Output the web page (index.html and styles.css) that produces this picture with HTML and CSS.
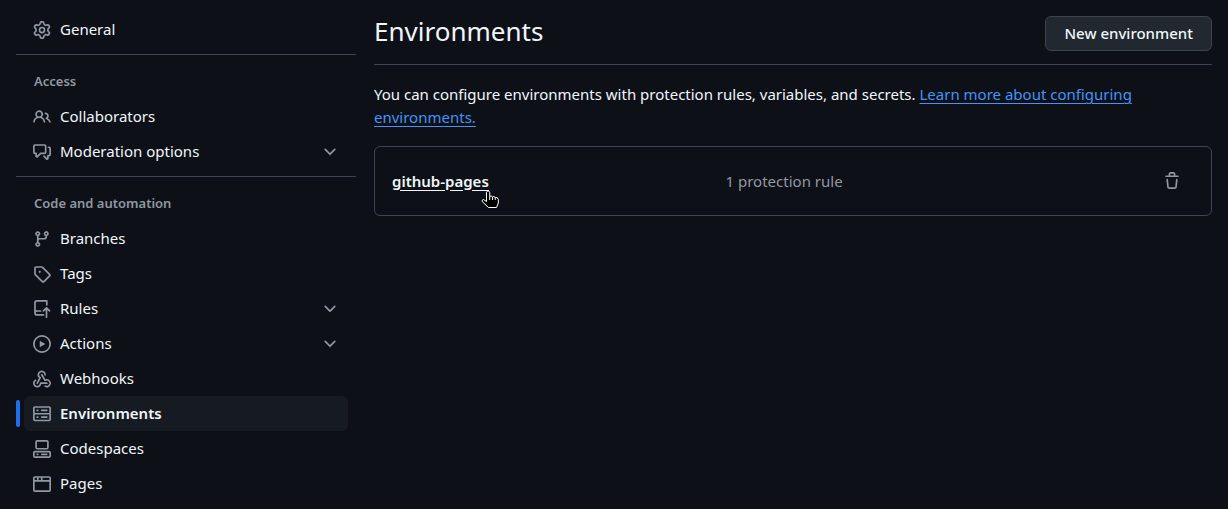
FILE: index.html
```html
<!DOCTYPE html>
<html lang="en">
<head>
<meta charset="utf-8">
<meta name="viewport" content="width=device-width, initial-scale=1">
<title>Environments</title>
<link rel="stylesheet" href="styles.css">
</head>
<body>
<div class="layout">
  <nav class="sidebar" aria-label="Settings">
    <ul class="nav-list">
      <li><a class="nav-item" href="#general"><svg class="icon" viewBox="0 0 16 16"><path d="M8 0a8.2 8.2 0 0 1 .701.031C9.444.095 9.99.645 10.16 1.29l.288 1.107c.018.066.079.158.212.224.231.114.454.243.668.386.123.082.233.09.299.071l1.103-.303c.644-.176 1.392.021 1.82.63.27.385.506.792.704 1.218.315.675.111 1.422-.364 1.891l-.814.806c-.049.048-.098.147-.088.294.016.257.016.515 0 .772-.01.147.038.246.088.294l.814.806c.475.469.679 1.216.364 1.891a7.977 7.977 0 0 1-.704 1.217c-.428.61-1.176.807-1.82.63l-1.102-.302c-.067-.019-.177-.011-.3.071a5.909 5.909 0 0 1-.668.386c-.133.066-.194.158-.211.224l-.29 1.106c-.168.646-.715 1.196-1.458 1.26a8.006 8.006 0 0 1-1.402 0c-.743-.064-1.289-.614-1.458-1.26l-.289-1.106c-.018-.066-.079-.158-.212-.224a5.738 5.738 0 0 1-.668-.386c-.123-.082-.233-.09-.299-.071l-1.103.303c-.644.176-1.392-.021-1.82-.63a8.12 8.12 0 0 1-.704-1.218c-.315-.675-.111-1.422.363-1.891l.815-.806c.05-.048.098-.147.088-.294a6.214 6.214 0 0 1 0-.772c.01-.147-.038-.246-.088-.294l-.815-.806C.635 6.045.431 5.298.746 4.623a7.92 7.92 0 0 1 .704-1.217c.428-.61 1.176-.807 1.82-.63l1.102.302c.067.019.177.011.3-.071.214-.143.437-.272.668-.386.133-.066.194-.158.211-.224l.29-1.106C6.009.645 6.556.095 7.299.03 7.53.01 7.764 0 8 0Zm-.571 1.525c-.036.003-.108.036-.137.146l-.289 1.105c-.147.561-.549.967-.998 1.189-.173.086-.34.183-.5.29-.417.278-.97.423-1.529.27l-1.103-.303c-.109-.03-.175.016-.195.045-.22.312-.412.644-.573.99-.014.031-.021.11.059.19l.815.806c.411.406.562.957.53 1.456a4.709 4.709 0 0 0 0 .582c.032.499-.119 1.05-.53 1.456l-.815.806c-.081.08-.073.159-.059.19.162.346.353.677.573.989.02.03.085.076.195.046l1.102-.303c.56-.153 1.113-.008 1.53.27.161.107.328.204.501.29.447.222.85.629.997 1.189l.289 1.105c.029.109.101.143.137.146a6.6 6.6 0 0 0 1.142 0c.036-.003.108-.036.137-.146l.289-1.105c.147-.561.549-.967.998-1.189.173-.086.34-.183.5-.29.417-.278.97-.423 1.529-.27l1.103.303c.109.029.175-.016.195-.045.22-.313.411-.644.573-.99.014-.031.021-.11-.059-.19l-.815-.806c-.411-.406-.562-.957-.53-1.456a4.709 4.709 0 0 0 0-.582c-.032-.499.119-1.05.53-1.456l.815-.806c.081-.08.073-.159.059-.19a6.464 6.464 0 0 0-.573-.989c-.02-.03-.085-.076-.195-.046l-1.102.303c-.56.153-1.113.008-1.53-.27a4.44 4.44 0 0 0-.501-.29c-.447-.222-.85-.629-.997-1.189l-.289-1.105c-.029-.11-.101-.143-.137-.146a6.6 6.6 0 0 0-1.142 0ZM11 8a3 3 0 1 1-6 0 3 3 0 0 1 6 0ZM9.5 8a1.5 1.5 0 1 0-3.001.001A1.5 1.5 0 0 0 9.5 8Z"/></svg><span>General</span></a></li>
    </ul>
    <section class="nav-section">
      <h2 class="nav-heading">Access</h2>
      <ul class="nav-list">
        <li><a class="nav-item" href="#collaborators"><svg class="icon" viewBox="0 0 16 16"><path d="M2 5.5a3.5 3.5 0 1 1 5.898 2.549 5.508 5.508 0 0 1 3.034 4.084.75.75 0 1 1-1.482.235 4 4 0 0 0-7.9 0 .75.75 0 0 1-1.482-.236A5.507 5.507 0 0 1 3.102 8.05 3.493 3.493 0 0 1 2 5.5ZM11 4a3.001 3.001 0 0 1 2.22 5.018 5.01 5.01 0 0 1 2.56 3.012.749.749 0 0 1-.885.954.752.752 0 0 1-.549-.514 3.507 3.507 0 0 0-2.522-2.372.75.75 0 0 1-.574-.73v-.352a.75.75 0 0 1 .416-.672A1.5 1.5 0 0 0 11 5.5.75.75 0 0 1 11 4Zm-5.5-.5a2 2 0 1 0-.001 3.999A2 2 0 0 0 5.5 3.5Z"/></svg><span>Collaborators</span></a></li>
        <li><button class="nav-item" type="button" aria-expanded="false"><svg class="icon" viewBox="0 0 16 16"><path d="M1.75 1h8.5c.966 0 1.75.784 1.75 1.75v5.5A1.75 1.75 0 0 1 10.25 10H7.061l-2.574 2.573A1.458 1.458 0 0 1 2 11.543V10h-.25A1.75 1.75 0 0 1 0 8.25v-5.5C0 1.784.784 1 1.75 1ZM1.5 2.75v5.5c0 .138.112.25.25.25h1a.75.75 0 0 1 .75.75v2.19l2.72-2.72a.749.749 0 0 1 .53-.22h3.5a.25.25 0 0 0 .25-.25v-5.5a.25.25 0 0 0-.25-.25h-8.5a.25.25 0 0 0-.25.25Zm13 2a.25.25 0 0 0-.25-.25h-.5a.75.75 0 0 1 0-1.5h.5c.966 0 1.75.784 1.75 1.75v5.5A1.75 1.75 0 0 1 14.25 12H14v1.543a1.458 1.458 0 0 1-2.487 1.03L9.22 12.28a.749.749 0 0 1 .326-1.275.749.749 0 0 1 .734.215l2.22 2.22v-2.19a.75.75 0 0 1 .75-.75h1a.25.25 0 0 0 .25-.25Z"/></svg><span>Moderation options</span><svg class="icon chevron" viewBox="0 0 16 16"><path d="M12.78 5.22a.749.749 0 0 1 0 1.06l-4.25 4.25a.749.749 0 0 1-1.06 0L3.22 6.28a.749.749 0 1 1 1.06-1.06L8 8.939l3.72-3.719a.749.749 0 0 1 1.06 0Z"/></svg></button></li>
      </ul>
    </section>
    <section class="nav-section">
      <h2 class="nav-heading">Code and automation</h2>
      <ul class="nav-list">
        <li><a class="nav-item" href="#branches"><svg class="icon" viewBox="0 0 16 16"><path d="M9.5 3.25a2.25 2.25 0 1 1 3 2.122V6A2.5 2.5 0 0 1 10 8.5H6a1 1 0 0 0-1 1v1.128a2.251 2.251 0 1 1-1.5 0V5.372a2.25 2.25 0 1 1 1.5 0v1.836A2.493 2.493 0 0 1 6 7h4a1 1 0 0 0 1-1v-.628A2.25 2.25 0 0 1 9.5 3.25Zm-6 0a.75.75 0 1 0 1.5 0 .75.75 0 0 0-1.5 0Zm8.25-.75a.75.75 0 1 0 0 1.5.75.75 0 0 0 0-1.5ZM4.25 12a.75.75 0 1 0 0 1.5.75.75 0 0 0 0-1.5Z"/></svg><span>Branches</span></a></li>
        <li><a class="nav-item" href="#tags"><svg class="icon" viewBox="0 0 16 16"><path d="M1 7.775V2.75C1 1.784 1.784 1 2.75 1h5.025c.464 0 .91.184 1.238.513l6.25 6.25a1.75 1.75 0 0 1 0 2.474l-5.026 5.026a1.75 1.75 0 0 1-2.474 0l-6.25-6.25A1.752 1.752 0 0 1 1 7.775Zm1.5 0c0 .066.026.13.073.177l6.25 6.25a.25.25 0 0 0 .354 0l5.025-5.025a.25.25 0 0 0 0-.354l-6.25-6.25a.25.25 0 0 0-.177-.073H2.75a.25.25 0 0 0-.25.25ZM6 5a1 1 0 1 1 0 2 1 1 0 0 1 0-2Z"/></svg><span>Tags</span></a></li>
        <li><button class="nav-item" type="button" aria-expanded="false"><svg class="icon" viewBox="0 0 16 16"><path d="M1 2.5A2.5 2.5 0 0 1 3.5 0h8.75a.75.75 0 0 1 .75.75v3.5a.75.75 0 0 1-1.5 0V1.5h-8a1 1 0 0 0-1 1v6.708A2.493 2.493 0 0 1 3.5 9h3.25a.75.75 0 0 1 0 1.5H3.5a1 1 0 0 0 0 2h5.75a.75.75 0 0 1 0 1.5H3.5A2.5 2.5 0 0 1 1 11.5Zm13.23 7.79-1.48-1.49v6.45a.75.75 0 0 1-1.5 0V8.81L9.78 10.28a.751.751 0 0 1-1.06-1.06l2.75-2.75a.75.75 0 0 1 1.06 0l2.75 2.75a.75.75 0 0 1-1.05 1.07Z"/></svg><span>Rules</span><svg class="icon chevron" viewBox="0 0 16 16"><path d="M12.78 5.22a.749.749 0 0 1 0 1.06l-4.25 4.25a.749.749 0 0 1-1.06 0L3.22 6.28a.749.749 0 1 1 1.06-1.06L8 8.939l3.72-3.719a.749.749 0 0 1 1.06 0Z"/></svg></button></li>
        <li><button class="nav-item" type="button" aria-expanded="false"><svg class="icon" viewBox="0 0 16 16"><path d="M8 0a8 8 0 1 1 0 16A8 8 0 0 1 8 0ZM1.5 8a6.5 6.5 0 1 0 13 0 6.5 6.5 0 0 0-13 0Zm4.879-2.773 4.264 2.559a.25.25 0 0 1 0 .428l-4.264 2.559A.25.25 0 0 1 6 10.559V5.442a.25.25 0 0 1 .379-.215Z"/></svg><span>Actions</span><svg class="icon chevron" viewBox="0 0 16 16"><path d="M12.78 5.22a.749.749 0 0 1 0 1.06l-4.25 4.25a.749.749 0 0 1-1.06 0L3.22 6.28a.749.749 0 1 1 1.06-1.06L8 8.939l3.72-3.719a.749.749 0 0 1 1.06 0Z"/></svg></button></li>
        <li><a class="nav-item" href="#webhooks"><svg class="icon" viewBox="0 0 16 16"><path d="M5.5 4.25a2.25 2.25 0 0 1 4.5 0 .75.75 0 0 0 1.5 0 3.75 3.75 0 1 0-6.14 2.889l-2.272 4.258a.75.75 0 0 0 1.324.706L7 7.25a.75.75 0 0 0-.309-1.015A2.25 2.25 0 0 1 5.5 4.25Z"/><path d="M7.364 3.607a.75.75 0 0 1 1.03.257l2.608 4.349a3.75 3.75 0 1 1-.628 6.785.75.75 0 0 1 .752-1.299 2.25 2.25 0 1 0-.033-3.88.75.75 0 0 1-1.03-.256L7.107 4.636a.75.75 0 0 1 .257-1.03Z"/><path d="M2.9 8.776A.75.75 0 0 1 2.625 9.8 2.25 2.25 0 1 0 6 11.75a.75.75 0 0 1 .75-.751h5.5a.75.75 0 0 1 0 1.5H7.425a3.751 3.751 0 1 1-5.55-3.998.75.75 0 0 1 1.024.274Z"/></svg><span>Webhooks</span></a></li>
        <li class="current"><a class="nav-item" href="#environments" aria-current="page"><svg class="icon" viewBox="0 0 16 16"><path d="M1.75 1h12.5c.966 0 1.75.784 1.75 1.75v4c0 .372-.116.717-.314 1 .198.283.314.628.314 1v4a1.75 1.75 0 0 1-1.75 1.75H1.75A1.75 1.75 0 0 1 0 12.75v-4c0-.358.109-.707.314-1a1.739 1.739 0 0 1-.314-1v-4C0 1.784.784 1 1.75 1ZM1.5 2.75v4c0 .138.112.25.25.25h12.5a.25.25 0 0 0 .25-.25v-4a.25.25 0 0 0-.25-.25H1.75a.25.25 0 0 0-.25.25Zm.25 5.75a.25.25 0 0 0-.25.25v4c0 .138.112.25.25.25h12.5a.25.25 0 0 0 .25-.25v-4a.25.25 0 0 0-.25-.25ZM7 4.75A.75.75 0 0 1 7.75 4h4.5a.75.75 0 0 1 0 1.5h-4.5A.75.75 0 0 1 7 4.75ZM7.75 10h4.5a.75.75 0 0 1 0 1.5h-4.5a.75.75 0 0 1 0-1.5ZM3 4.75A.75.75 0 0 1 3.75 4h.5a.75.75 0 0 1 0 1.5h-.5A.75.75 0 0 1 3 4.75ZM3.75 10h.5a.75.75 0 0 1 0 1.5h-.5a.75.75 0 0 1 0-1.5Z"/></svg><span>Environments</span></a></li>
        <li><a class="nav-item" href="#codespaces"><svg class="icon" viewBox="0 0 16 16"><path d="M0 11.25c0-.966.784-1.75 1.75-1.75h12.5c.966 0 1.75.784 1.75 1.75v3A1.75 1.75 0 0 1 14.25 16H1.75A1.75 1.75 0 0 1 0 14.25Zm2-9.5C2 .784 2.784 0 3.75 0h8.5C13.216 0 14 .784 14 1.75v5a1.75 1.75 0 0 1-1.75 1.75h-8.5A1.75 1.75 0 0 1 2 6.75Zm1.75-.25a.25.25 0 0 0-.25.25v5c0 .138.112.25.25.25h8.5a.25.25 0 0 0 .25-.25v-5a.25.25 0 0 0-.25-.25Zm-2 9.5a.25.25 0 0 0-.25.25v3c0 .138.112.25.25.25h12.5a.25.25 0 0 0 .25-.25v-3a.25.25 0 0 0-.25-.25Z"/><path d="M7 12.75a.75.75 0 0 1 .75-.75h4.5a.75.75 0 0 1 0 1.5h-4.5a.75.75 0 0 1-.75-.75Zm-4 0a.75.75 0 0 1 .75-.75h.5a.75.75 0 0 1 0 1.5h-.5a.75.75 0 0 1-.75-.75Z"/></svg><span>Codespaces</span></a></li>
        <li><a class="nav-item" href="#pages"><svg class="icon" viewBox="0 0 16 16"><path d="M0 2.75C0 1.784.784 1 1.75 1h12.5c.966 0 1.75.784 1.75 1.75v10.5A1.75 1.75 0 0 1 14.25 15H1.75A1.75 1.75 0 0 1 0 13.25ZM14.5 6h-13v7.25c0 .138.112.25.25.25h12.5a.25.25 0 0 0 .25-.25Zm-6-3.5v2h6V2.75a.25.25 0 0 0-.25-.25ZM5 2.5v2h2v-2Zm-3.25 0a.25.25 0 0 0-.25.25V4.5h2v-2Z"/></svg><span>Pages</span></a></li>
      </ul>
    </section>
  </nav>
  <main class="content">
    <header class="page-header">
      <h1 class="page-title">Environments</h1>
      <button class="button" type="button">New environment</button>
    </header>
    <p class="intro">You can configure environments with protection rules, variables, and secrets. <a class="intro-link" href="#learn-more">Learn more about configuring environments.</a></p>
    <div class="env-row">
      <div class="env-name"><a class="env-link" href="#github-pages">github-pages<svg class="pointer" viewBox="0 0 18 19" aria-hidden="true"><path d="M5.5 11.5V2.2a1.7 1.7 0 0 1 3.2 0V6.5Q10.2 5.3 11.5 6.8Q13 5.9 14.2 7.5Q17 7 17.3 9.5V13L15.5 17.5H7.5L1.2 11.5Q.6 9.8 2.5 9.5L5.5 11.5Z"/><path d="M8.7 6.5V10M11.5 7V10M14.2 7.5V10"/></svg></a></div>
      <span class="env-rules">1 protection rule</span>
      <button class="delete" type="button" aria-label="Delete environment"><svg class="icon" viewBox="0 0 16 16"><path d="M11 1.75V3h2.25a.75.75 0 0 1 0 1.5H2.75a.75.75 0 0 1 0-1.5H5V1.75C5 .784 5.784 0 6.75 0h2.5C10.216 0 11 .784 11 1.75ZM4.496 6.675l.66 6.6a.25.25 0 0 0 .249.225h5.19a.25.25 0 0 0 .249-.225l.66-6.6a.75.75 0 0 1 1.492.149l-.66 6.6A1.748 1.748 0 0 1 10.595 15h-5.19a1.75 1.75 0 0 1-1.741-1.575l-.66-6.6a.75.75 0 1 1 1.492-.15ZM6.5 1.75V3h3V1.75a.25.25 0 0 0-.25-.25h-2.5a.25.25 0 0 0-.25.25Z"/></svg></button>
    </div>
  </main>
</div>
</body>
</html>
```

FILE: styles.css
```css
* {
  box-sizing: border-box;
}

body {
  margin: 0;
  background: #0d1117;
  color: #f0f6fc;
  font-family: "Noto Sans", sans-serif;
  font-size: 15px;
  line-height: 23px;
}

button {
  font: inherit;
  color: inherit;
  cursor: pointer;
}

.layout {
  display: grid;
  grid-template-columns: 340px minmax(0, 1fr);
  gap: 18px;
  padding: 0 16px;
}

.sidebar {
  padding-top: 12px;
}

.nav-list {
  margin: 0;
  padding: 0 8px;
  list-style: none;
}

.nav-section {
  margin-top: 7px;
  padding-top: 9px;
  border-top: 1px solid #3d444d;
}

.nav-heading {
  margin: 0;
  padding: 7px 18px 8px;
  color: #9198a1;
  font-size: 13px;
  font-weight: 600;
  line-height: 20px;
}

.nav-item {
  display: flex;
  align-items: center;
  gap: 9px;
  width: 100%;
  height: 35px;
  padding: 0 9px;
  border: 0;
  border-radius: 6px;
  background: none;
  color: inherit;
  text-align: left;
  text-decoration: none;
}

.icon {
  flex: none;
  width: 18px;
  height: 18px;
  fill: #9198a1;
}

.chevron {
  margin-left: auto;
}

.current {
  position: relative;
}

.current .nav-item {
  background: #161b22;
  font-weight: 600;
}

.current::before {
  content: "";
  position: absolute;
  top: 4px;
  bottom: 4px;
  left: -8px;
  width: 4px;
  border-radius: 6px;
  background: #1f6feb;
}

.content {
  padding-top: 16px;
}

.page-header {
  display: flex;
  align-items: flex-start;
  justify-content: space-between;
  padding-bottom: 13px;
  border-bottom: 1px solid #3d444d;
}

.page-title {
  margin: 0;
  font-size: 26px;
  font-weight: 400;
  line-height: 30px;
}

.button {
  height: 35px;
  padding: 0 18px;
  border: 1px solid #3d444d;
  border-radius: 6px;
  background: #212830;
  font-weight: 500;
}

.intro {
  margin: 18px 0 17px;
}

.intro-link {
  color: #4493f8;
  text-underline-offset: 3px;
}

.env-row {
  display: grid;
  grid-template-columns: 11fr 14fr auto;
  align-items: center;
  padding: 17px;
  border: 1px solid #3d444d;
  border-radius: 6px;
}

.env-link {
  position: relative;
  color: inherit;
  font-weight: 600;
  text-underline-offset: 3px;
}

.env-rules {
  color: #9198a1;
}

.delete {
  display: flex;
  padding: 8px 13px;
  border: 0;
  background: none;
}

.pointer {
  position: absolute;
  right: -10px;
  bottom: -18px;
  width: 18px;
  height: 19px;
  fill: #000;
  stroke: #fff;
  stroke-linejoin: round;
}
```
